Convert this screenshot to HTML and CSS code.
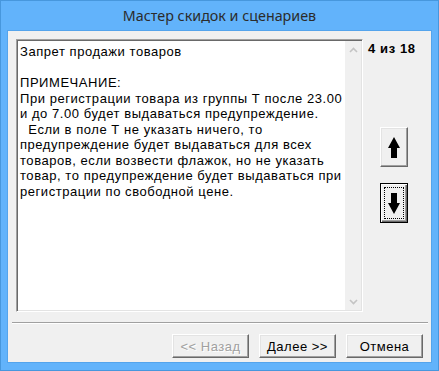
FILE: index.html
```html
<!DOCTYPE html>
<html lang="ru">
<head>
    <meta charset="UTF-8">
    <title>Мастер скидок и сценариев</title>
    <link rel="stylesheet" href="styles.css">
</head>
<body>

<div class="window">
    <div class="titlebar">Мастер скидок и сценариев</div>

    <div class="client">
        <div class="main">
            <div class="memo">
                <div class="memo-text">Запрет продажи товаров

ПРИМЕЧАНИЕ:
При регистрации товара из группы Т после 23.00
и до 7.00 будет выдаваться предупреждение.
  Если в поле Т не указать ничего, то
предупреждение будет выдаваться для всех
товаров, если возвести флажок, но не указать
товар, то предупреждение будет выдаваться при
регистрации по свободной цене.</div>
                <div class="scrollbar">
                    <svg width="9" height="6" viewBox="0 0 9 6"><path d="M1 5 L4.5 1.5 L8 5" fill="none" stroke="#c4c4c4" stroke-width="1.6"/></svg>
                    <svg width="9" height="6" viewBox="0 0 9 6"><path d="M1 1 L4.5 4.5 L8 1" fill="none" stroke="#c4c4c4" stroke-width="1.6"/></svg>
                </div>
            </div>

            <div class="side">
                <div class="counter">4 из 18</div>
                <button class="btn arrow-btn up">
                    <svg width="12" height="21" viewBox="0 0 12 21"><path d="M6 0 L12 11 L9 11 L9 21 L3 21 L3 11 L0 11 Z" fill="#000"/></svg>
                </button>
                <button class="btn arrow-btn down default">
                    <span class="focus">
                        <svg width="12" height="21" viewBox="0 0 12 21"><path d="M3 0 L9 0 L9 10 L12 10 L6 21 L0 10 L3 10 Z" fill="#000"/></svg>
                    </span>
                </button>
            </div>
        </div>

        <div class="separator"></div>

        <div class="buttons">
            <button class="btn push" disabled>&lt;&lt; Назад</button>
            <button class="btn push">Далее &gt;&gt;</button>
            <button class="btn push">Отмена</button>
        </div>
    </div>
</div>

</body>
</html>
```

FILE: styles.css
```css
body {
    margin: 0;
    padding: 0;
    background-color: #ffffff;
    font-family: "Liberation Sans", Arial, sans-serif;
}
.window {
    width: 439px;
    height: 371px;
    box-sizing: border-box;
    background-color: #62b3fb;
    border: 1px solid #4797dd;
    padding: 0 7px 8px 7px;
    display: flex;
    flex-direction: column;
}
.titlebar {
    height: 30px;
    line-height: 30px;
    text-align: center;
    font-family: "Noto Sans", "Open Sans", sans-serif;
    font-size: 14.3px;
    color: #2b2b2b;
}
.client {
    flex: 1;
    background-color: #f0f0f0;
    box-shadow: 0 0 0 1px #54a4ec;
    display: flex;
    flex-direction: column;
}
.main {
    display: flex;
    padding: 8px 0 0 8px;
}
.memo {
    width: 347px;
    height: 273px;
    box-sizing: border-box;
    background-color: #ffffff;
    border-top: 1px solid #a0a0a0;
    border-left: 1px solid #a0a0a0;
    border-right: 1px solid #ffffff;
    border-bottom: 1px solid #ffffff;
    box-shadow: inset 1px 1px 0 #696969, inset -1px -1px 0 #e3e3e3;
    display: flex;
    padding: 1px;
}
.memo-text {
    flex: 1;
    white-space: pre;
    font-size: 13px;
    letter-spacing: 0.55px;
    line-height: 15.5px;
    color: #000000;
    padding: 3px 0 0 2px;
    overflow: hidden;
}
.scrollbar {
    width: 16px;
    flex-shrink: 0;
    background-color: #f0f0f0;
    display: flex;
    flex-direction: column;
    justify-content: space-between;
    align-items: center;
    padding: 6px 0 5px 0;
}
.side {
    display: flex;
    flex-direction: column;
    padding-left: 5px;
}
.counter {
    font-size: 13px;
    font-weight: bold;
    letter-spacing: 0.6px;
    line-height: 15px;
    margin-top: 2px;
    white-space: nowrap;
}
.btn {
    background-color: #f0f0f0;
    border-top: 1px solid #ffffff;
    border-left: 1px solid #ffffff;
    border-right: 1px solid #696969;
    border-bottom: 1px solid #696969;
    box-shadow: inset -1px -1px 0 #a0a0a0, inset 1px 1px 0 #e3e3e3;
    border-radius: 0;
    padding: 0;
    margin: 0;
    font-family: "Liberation Sans", Arial, sans-serif;
    font-size: 13px;
    letter-spacing: 0.5px;
    color: #000000;
    box-sizing: border-box;
}
.arrow-btn {
    width: 28px;
    height: 40px;
    margin-left: 12px;
    display: flex;
    align-items: center;
    justify-content: center;
}
.arrow-btn.up {
    margin-top: 71px;
}
.arrow-btn.down {
    margin-top: 16px;
}
.btn.default {
    border: 1px solid #000000;
    box-shadow: inset 1px 1px 0 #ffffff, inset -1px -1px 0 #696969, inset -2px -2px 0 #a0a0a0;
}
.focus {
    width: 20px;
    height: 32px;
    box-sizing: border-box;
    border: 1px dotted #000000;
    display: flex;
    align-items: center;
    justify-content: center;
}
.separator {
    margin: 10px 3px 0 4px;
    height: 1px;
    background-color: #a0a0a0;
    border-bottom: 1px solid #ffffff;
}
.buttons {
    display: flex;
    justify-content: flex-end;
    gap: 10px;
    padding: 10px 8px 0 0;
}
.push {
    width: 77px;
    height: 24px;
}
.push:disabled {
    color: #a0a0a0;
    text-shadow: 1px 1px 0 #ffffff;
}
```
